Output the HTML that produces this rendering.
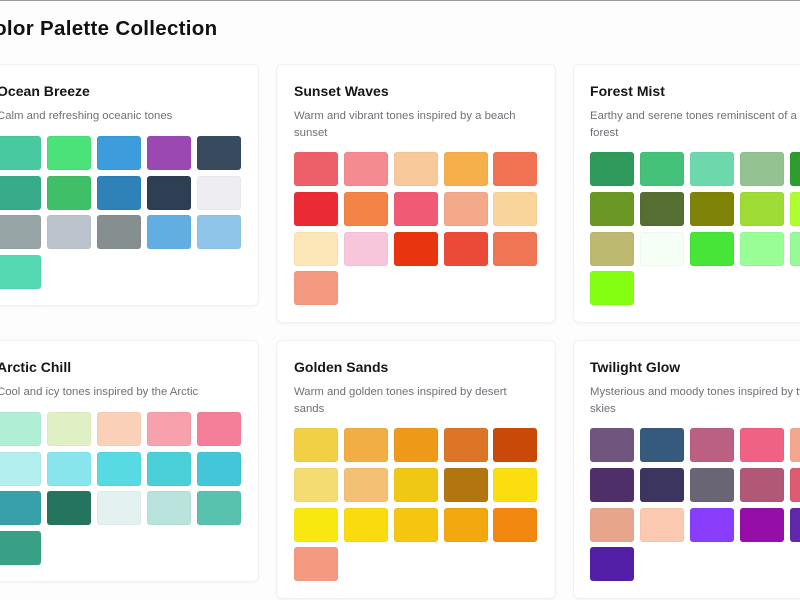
<!DOCTYPE html>
<html><head><meta charset="utf-8"><style>
html,body{margin:0;padding:0;width:800px;height:600px;overflow:hidden;background:#fdfdfe;font-family:"Liberation Sans",sans-serif}
.top{position:absolute;left:0;top:0;width:800px;height:1px;background:#999}
h1{position:absolute;left:-21px;top:17px;margin:0;font-size:20.5px;line-height:24px;font-weight:700;color:#111;letter-spacing:.3px;white-space:nowrap}
.card{position:absolute;width:280px;box-sizing:border-box;background:#fff;border:1px solid #f1f1f4;border-radius:6px;box-shadow:0 1px 2px rgba(0,0,0,.04)}
h2{position:absolute;left:17px;top:18px;margin:0;font-size:14px;line-height:17px;font-weight:700;color:#161618;letter-spacing:.02px;white-space:nowrap}
p{position:absolute;left:17px;top:43px;margin:0;width:246px;font-size:11.35px;line-height:17px;color:#6f6f76;white-space:nowrap}
.s h2,.s p{left:16px}
i{position:absolute;width:44px;height:34px;border-radius:3px;display:block;box-shadow:inset 0 0 0 .5px rgba(0,0,0,.05)}
</style></head><body>
<div class="top"></div>
<h1>Color Palette Collection</h1>

<div class="card" style="left:-21px;top:64px;height:242px">
<h2>Ocean Breeze</h2><p>Calm and refreshing oceanic tones</p>
<i style="left:17px;top:71px;background:#48c9a0"></i><i style="left:67px;top:71px;background:#4be27a"></i><i style="left:117px;top:71px;background:#3d9cdb"></i><i style="left:167px;top:71px;background:#9b48b2"></i><i style="left:217px;top:71px;background:#384a5e"></i>
<i style="left:17px;top:111px;background:#38ac8a"></i><i style="left:67px;top:111px;background:#3fbf66"></i><i style="left:117px;top:111px;background:#2e82b7"></i><i style="left:167px;top:111px;background:#2e3e53"></i><i style="left:217px;top:111px;background:#eeeef2"></i>
<i style="left:17px;top:150px;background:#97a5a6"></i><i style="left:67px;top:150px;background:#bdc3cc"></i><i style="left:117px;top:150px;background:#858f8f"></i><i style="left:167px;top:150px;background:#62aee2"></i><i style="left:217px;top:150px;background:#8ec5e8"></i>
<i style="left:17px;top:190px;background:#55d9b3"></i>
</div>

<div class="card" style="left:276px;top:64px;height:259px">
<h2>Sunset Waves</h2><p>Warm and vibrant tones inspired by a beach<br>sunset</p>
<i style="left:17px;top:87px;background:#ee6069"></i><i style="left:67px;top:87px;background:#f48b90"></i><i style="left:117px;top:87px;background:#f8c99b"></i><i style="left:167px;top:87px;background:#f5b04c"></i><i style="left:216px;top:87px;background:#f27353"></i>
<i style="left:17px;top:127px;background:#ea2a35"></i><i style="left:67px;top:127px;background:#f38446"></i><i style="left:117px;top:127px;background:#f05a74"></i><i style="left:167px;top:127px;background:#f5a98b"></i><i style="left:216px;top:127px;background:#f9d59c"></i>
<i style="left:17px;top:167px;background:#fce5b6"></i><i style="left:67px;top:167px;background:#f8c6da"></i><i style="left:117px;top:167px;background:#e9350f"></i><i style="left:167px;top:167px;background:#eb4a39"></i><i style="left:216px;top:167px;background:#ef7555"></i>
<i style="left:17px;top:206px;background:#f59a80"></i>
</div>

<div class="card s" style="left:573px;top:64px;height:259px">
<h2>Forest Mist</h2><p>Earthy and serene tones reminiscent of a misty<br>forest</p>
<i style="left:16px;top:87px;background:#2f9a5c"></i><i style="left:66px;top:87px;background:#45c27a"></i><i style="left:116px;top:87px;background:#6ed8ad"></i><i style="left:166px;top:87px;background:#94c291"></i><i style="left:216px;top:87px;background:#2e9c2e"></i>
<i style="left:16px;top:127px;background:#6b9824"></i><i style="left:66px;top:127px;background:#566e31"></i><i style="left:116px;top:127px;background:#7f8408"></i><i style="left:166px;top:127px;background:#a0dc36"></i><i style="left:216px;top:127px;background:#aefe30"></i>
<i style="left:16px;top:167px;background:#bdb970"></i><i style="left:66px;top:167px;background:#f5fff5"></i><i style="left:116px;top:167px;background:#48e539"></i><i style="left:166px;top:167px;background:#9afe96"></i><i style="left:216px;top:167px;background:#98f998"></i>
<i style="left:16px;top:206px;background:#84ff12"></i>
</div>

<div class="card" style="left:-21px;top:340px;height:242px">
<h2>Arctic Chill</h2><p>Cool and icy tones inspired by the Arctic</p>
<i style="left:17px;top:71px;background:#b0efd5"></i><i style="left:67px;top:71px;background:#dff0c4"></i><i style="left:117px;top:71px;background:#fad0b9"></i><i style="left:167px;top:71px;background:#f6a1ab"></i><i style="left:217px;top:71px;background:#f57f98"></i>
<i style="left:17px;top:111px;background:#b4eff0"></i><i style="left:67px;top:111px;background:#88e5ec"></i><i style="left:117px;top:111px;background:#58dae3"></i><i style="left:167px;top:111px;background:#48cfd8"></i><i style="left:217px;top:111px;background:#43c6d7"></i>
<i style="left:17px;top:150px;background:#38a0a8"></i><i style="left:67px;top:150px;background:#247460"></i><i style="left:117px;top:150px;background:#e3f2f1"></i><i style="left:167px;top:150px;background:#b9e3dc"></i><i style="left:217px;top:150px;background:#58c2ae"></i>
<i style="left:17px;top:190px;background:#38a085"></i>
</div>

<div class="card" style="left:276px;top:340px;height:259px">
<h2>Golden Sands</h2><p>Warm and golden tones inspired by desert<br>sands</p>
<i style="left:17px;top:87px;background:#f2d045"></i><i style="left:67px;top:87px;background:#f0ae45"></i><i style="left:117px;top:87px;background:#ee9a18"></i><i style="left:167px;top:87px;background:#dc7526"></i><i style="left:216px;top:87px;background:#c94a08"></i>
<i style="left:17px;top:127px;background:#f5dc72"></i><i style="left:67px;top:127px;background:#f3c074"></i><i style="left:117px;top:127px;background:#eec814"></i><i style="left:167px;top:127px;background:#b37510"></i><i style="left:216px;top:127px;background:#fade10"></i>
<i style="left:17px;top:167px;background:#f9e80f"></i><i style="left:67px;top:167px;background:#fadb0e"></i><i style="left:117px;top:167px;background:#f5c50f"></i><i style="left:167px;top:167px;background:#f3a80f"></i><i style="left:216px;top:167px;background:#f2880f"></i>
<i style="left:17px;top:206px;background:#f59a80"></i>
</div>

<div class="card s" style="left:573px;top:340px;height:259px">
<h2>Twilight Glow</h2><p>Mysterious and moody tones inspired by twilight<br>skies</p>
<i style="left:16px;top:87px;background:#70557f"></i><i style="left:66px;top:87px;background:#355a7e"></i><i style="left:116px;top:87px;background:#bb5f83"></i><i style="left:166px;top:87px;background:#ef6283"></i><i style="left:216px;top:87px;background:#f4a78f"></i>
<i style="left:16px;top:127px;background:#4f2f69"></i><i style="left:66px;top:127px;background:#3b3560"></i><i style="left:116px;top:127px;background:#6a6574"></i><i style="left:166px;top:127px;background:#b05876"></i><i style="left:216px;top:127px;background:#dc5a72"></i>
<i style="left:16px;top:167px;background:#e7a68c"></i><i style="left:66px;top:167px;background:#fbc9b0"></i><i style="left:116px;top:167px;background:#873dfa"></i><i style="left:166px;top:167px;background:#960ea8"></i><i style="left:216px;top:167px;background:#6128ab"></i>
<i style="left:16px;top:206px;background:#521fa6"></i>
</div>
</body></html>
